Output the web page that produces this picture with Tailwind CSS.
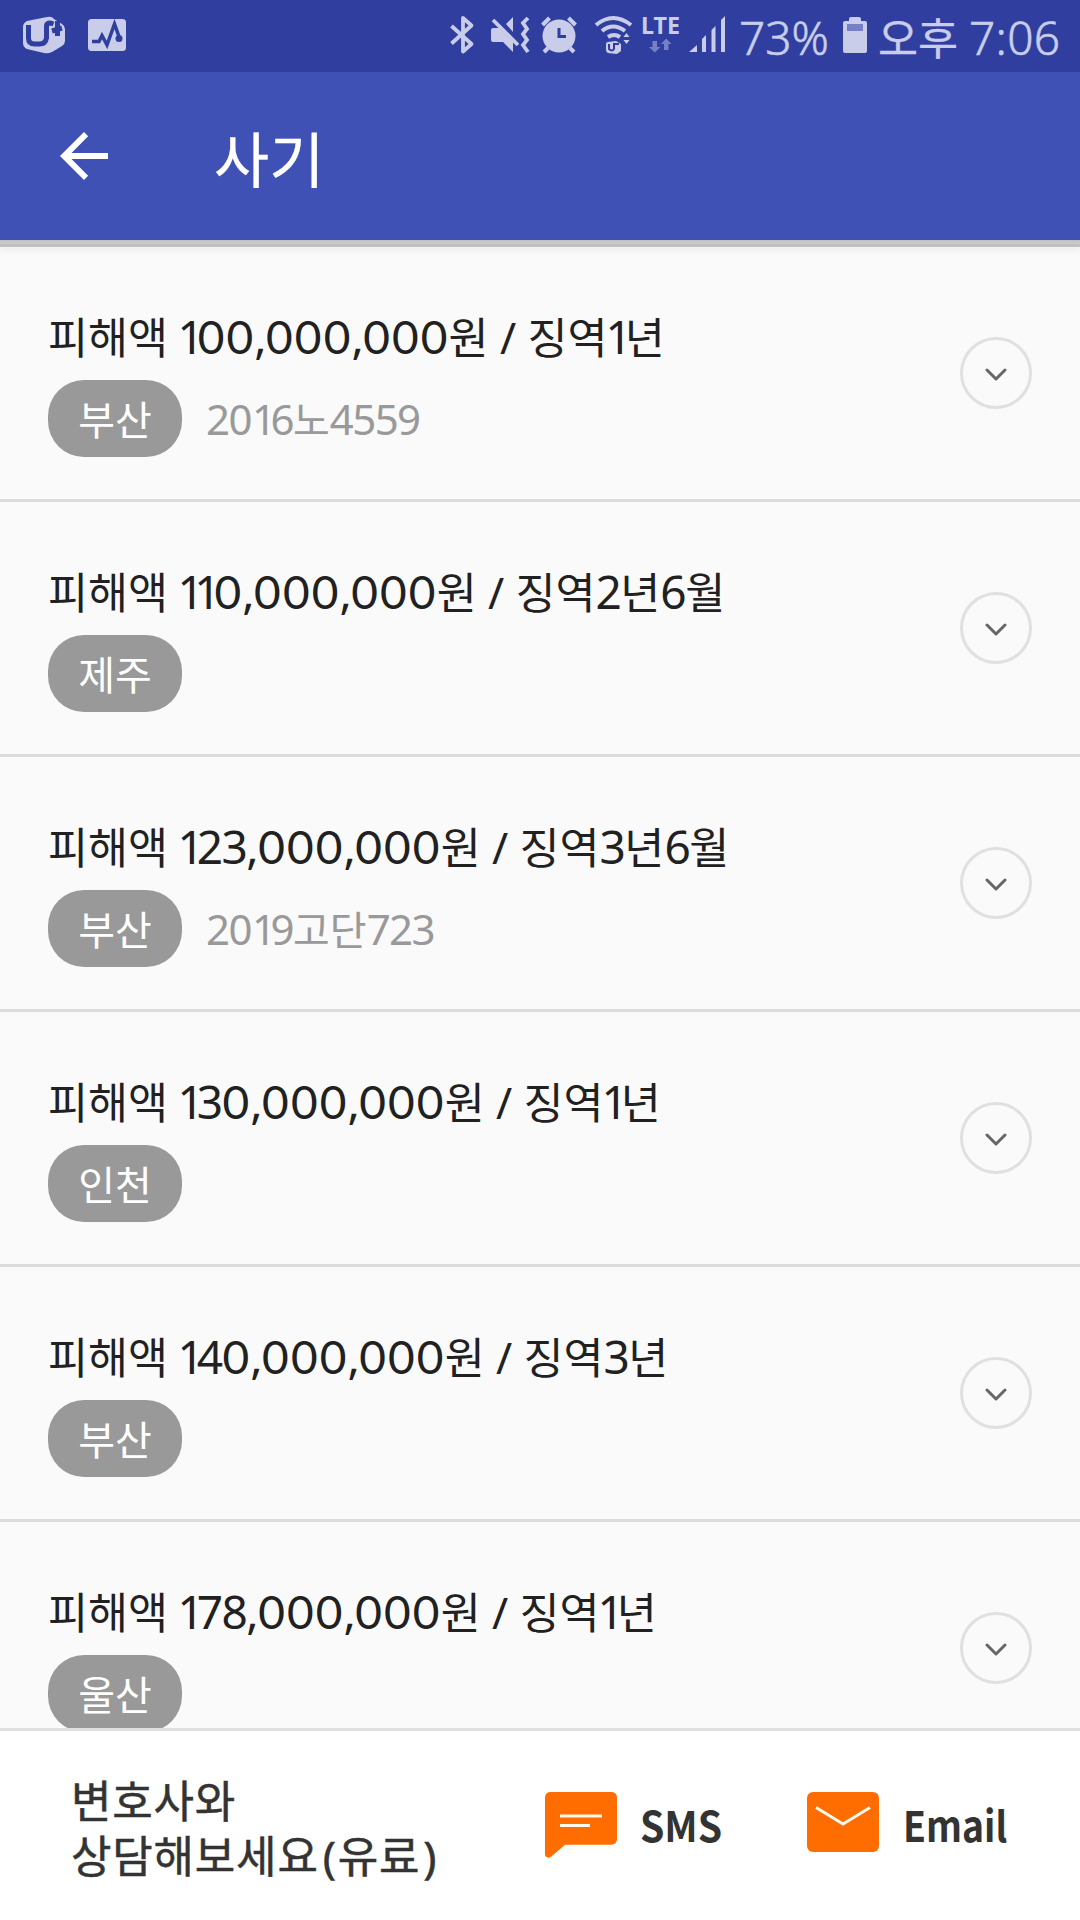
<!DOCTYPE html>
<html lang="ko">
<head>
<meta charset="utf-8">
<title>사기</title>
<script src="https://cdn.jsdelivr.net/npm/@tailwindcss/browser@4"></script>
</head>
<body class="bg-[#fafafa]">
<div class="flex h-[1920px] w-[1080px] flex-col overflow-hidden font-['Noto_Sans','Noto_Sans_CJK_KR',sans-serif] text-[#212121]">

  <!-- Status bar -->
  <header class="flex h-[72px] shrink-0 items-start bg-[#303f9f] text-[#c9cde9]">
    <svg class="h-[72px] w-[739px] shrink-0" viewBox="0 0 739 72" fill="none">
      <!-- carrier -->
      <path fill="currentColor" d="M23 27q0-4 4-6l20-4q5-1 7 2l8 5q3 2 3 5v12q0 3-3 5l-10 6q-4 2-8 1l-17-4q-4-2-4-6z"/>
      <path stroke="#303f9f" stroke-width="5" d="M28.500 25v13q0 6 6 6h5q6 0 7-6V26q0-3 4-3l3 1M57.500 21v15M52 31l10-3"/>
      <!-- activity -->
      <rect x="88" y="19" width="38" height="32" rx="3.500" fill="currentColor"/>
      <path stroke="#303f9f" stroke-width="3.500" d="M92 41.500h7l3-6 5 9.500 7.500-21 5 14"/><circle cx="119" cy="38.500" r="3.500" fill="#303f9f"/>
      <!-- bluetooth -->
      <path stroke="currentColor" stroke-width="3.800" stroke-linejoin="round" d="M451.500 26l20 18-8.500 7.500V18l8.500 7.500-20 18"/>
      <!-- muted, vibrating -->
      <path fill="currentColor" d="M491 30q0-2 2-2h6l14 14v10l-10-10h-10q-2 0-2-2zM506 24l7-7v15z"/>
      <path stroke="currentColor" stroke-width="3.800" d="M493 20l25 25M528 18l-5 5 4 6-4 5 4 6-4 5 5 7"/>
      <!-- alarm -->
      <circle cx="559" cy="36" r="16.500" fill="currentColor"/>
      <path stroke="currentColor" stroke-width="4" d="M542.500 25l7-7M575.500 25l-7-7M548 48l-4 4M570 48l4 4"/>
      <path stroke="#303f9f" stroke-width="3" d="M559 28v8.500h7"/>
      <!-- wifi -->
      <path stroke="currentColor" stroke-width="4" d="M596 25q17-14 35 0M602 31q11-9 23 0M608 37q6-4 12 0"/>
      <path fill="currentColor" d="M623.500 37l3-4 3 4zM623.500 40l3 4 3-4zM606 44q0-2 2-2l8-1 5 3v7l-4 3-9-1q-2-1-2-3z"/>
      <path stroke="#303f9f" stroke-width="2" d="M609 44v5q3 3 5 0v-5h5"/>
      <!-- data arrows -->
      <path fill="#7580c6" d="M652.500 41h4.500v6h3.500l-5.700 5.500-5.800-5.500h3.500zM664 50h4.500v-6h3l-5.300-5.500-5.200 5.500h3z"/>
      <!-- signal -->
      <path fill="currentColor" d="M689 52l8-7v7zM702 52V39l4-4v17zM711.500 52V30l4-4v26zM721 52V20l4-4v36z"/>
      <text x="641" y="34" fill="currentColor" font-family="Noto Sans" font-weight="700" font-size="22.500" textLength="39" lengthAdjust="spacingAndGlyphs">LTE</text>
    </svg>
    <div class="w-[104px] text-[46px] leading-[74px] font-light tracking-[0px] [-webkit-text-stroke:0.6px]">73%</div>
    <svg class="mt-[17px] h-[36px] w-[24px] shrink-0" viewBox="0 0 24 36"><path fill="currentColor" d="M2 4h4V2q0-2 2-2h8q2 0 2 2v2h4q2 0 2 2v28q0 2-2 2H2q-2 0-2-2V6q0-2 2-2z"/><path fill="#7580c6" d="M4 7h16v7H4z"/></svg>
    <div class="ml-[11px] text-[46px] leading-[74px] font-light whitespace-nowrap [-webkit-text-stroke:0.6px]"><span class="text-[43.500px] font-normal [-webkit-text-stroke:0.3px]">오후</span><span class="ml-[11px] tracking-[0.3px]">7:06</span></div>
  </header>

  <!-- App bar -->
  <div class="flex h-[168px] shrink-0 items-center bg-[#3f51b5] text-white">
    <svg class="ml-[60px] h-[48px] w-[48px]" viewBox="0 0 48 48"><path fill="#fff" d="M48 21v6H11.500l16.600 16.700L24 48 0 24 24 0l4.100 4.300L11.500 21z"/></svg>
    <h1 class="ml-[106px] pt-[8px] text-[60px] leading-[80px] [-webkit-text-stroke:0.3px]">사기</h1>
  </div>
  <!-- Two-step shadow under the app bar -->
  <div class="h-[4px] shrink-0 bg-linear-to-b from-[#c2c1c1] to-[#d2d1d0]"></div>
  <div class="z-10 h-[3px] shrink-0 bg-[#c0c0be] shadow-[0_2px_7px_rgba(0,0,0,.12)]"></div>

  <main id="list" class="min-h-0 flex-1 overflow-hidden"></main>

  <!-- Contact bar -->
  <footer class="flex h-[192px] shrink-0 border-t-[3px] border-[#e0e0e0] bg-white text-[#333]">
    <p class="ml-[71px] w-[474px] pt-[43px] text-[44px] leading-[55px] tracking-[0.8px] [-webkit-text-stroke:0.5px]">변호사와<br>상담해보세요<span class="ml-[4px] mr-[1px]">(</span>유료<span class="ml-[3px]">)</span></p>
    <a class="flex w-[262px] pt-[61px]">
      <svg class="h-[66px] w-[72px]" viewBox="0 0 72 66"><path fill="#ff6d00" d="M6 0h60q6 0 6 6v44q0 6-6 6H20L6 69q-2 1.500-4 .5-2-1-2-3V6q0-6 6-6z" transform="scale(1 .94)"/><path stroke="#fff8ec" stroke-width="3" d="M15 24h42M15 33.500h30"/></svg>
      <span class="ml-[23px] origin-left scale-x-[0.93] font-['Noto_Sans_CJK_KR'] text-[42px] leading-[64px] font-bold">SMS</span>
    </a>
    <a class="flex pt-[61px]">
      <svg class="h-[60px] w-[72px]" viewBox="0 0 72 60"><rect width="72" height="60" rx="6" fill="#ff6d00"/><path fill="none" stroke="#fff8ec" stroke-width="3" d="M9 15.500L36 32l27-16.500"/></svg>
      <span class="ml-[24px] origin-left scale-x-[0.89] font-['Noto_Sans_CJK_KR'] text-[42px] leading-[64px] font-bold">Email</span>
    </a>
  </footer>
</div>

<script>
  const cases = [
    ['피해액 100,000,000원 / 징역1년', '부산', '2016노4559'],
    ['피해액 110,000,000원 / 징역2년6월', '제주', ''],
    ['피해액 123,000,000원 / 징역3년6월', '부산', '2019고단723'],
    ['피해액 130,000,000원 / 징역1년', '인천', ''],
    ['피해액 140,000,000원 / 징역3년', '부산', ''],
    ['피해액 178,000,000원 / 징역1년', '울산', ''],
  ];
  // Digits are proportional: wide round zeros, narrow ones
  const title = s => s.replace(/[\d,]+/g, n => '<span class="text-[46px] tracking-[-1.500px]">' +
    n.replace(/0+|1+/g, d => d[0] === '0'
      ? `<span class="ml-[1px] -mr-[1px] font-['Lato'] tracking-[2.100px]">${d}</span>`
      : `<span class="-ml-[2px] mr-[2.500px] tracking-[-9.500px]">${d}</span>`) + '</span>');
  const code = s => s.replace(/\d+/g, n => '<span class="text-[42px] tracking-[-1.600px]">' +
    n.replace(/0|1/g, d => d === '0'
      ? `<span class="tracking-[0.600px]">${d}</span>`
      : `<span class="-ml-[1px] mr-[2.500px] tracking-[-8px]">${d}</span>`) + '</span>');
  document.getElementById('list').innerHTML = cases.map(([t, city, no]) => `
    <section class="flex h-[255px] border-b-[3px] border-[#dcdcdc] px-[48px]">
      <div class="flex-1 pt-[59px]">
        <h2 class="h-[60px] text-[43.500px] leading-[60px] whitespace-nowrap">${title(t)}</h2>
        <div class="mt-[14px] flex h-[77px] items-center">
          <span class="flex h-[77px] w-[134px] items-center justify-center rounded-[36px] bg-[#999] pt-[2px] text-[40px] leading-[60px] text-white">${city}</span>
          <span class="ml-[24px] pt-[2px] text-[40px] leading-[60px] text-[#999]">${code(no)}</span>
        </div>
      </div>
      <button class="flex size-[72px] items-center justify-center self-center rounded-full border-[3px] border-[#e0e0e0]">
        <svg class="mt-[3px] h-[13px] w-[22px]" viewBox="0 0 22 13"><path fill="none" stroke="#666" stroke-width="3" stroke-linecap="round" stroke-linejoin="round" d="M2 2l9 9 9-9"/></svg>
      </button>
    </section>`).join('');
</script>
</body>
</html>
